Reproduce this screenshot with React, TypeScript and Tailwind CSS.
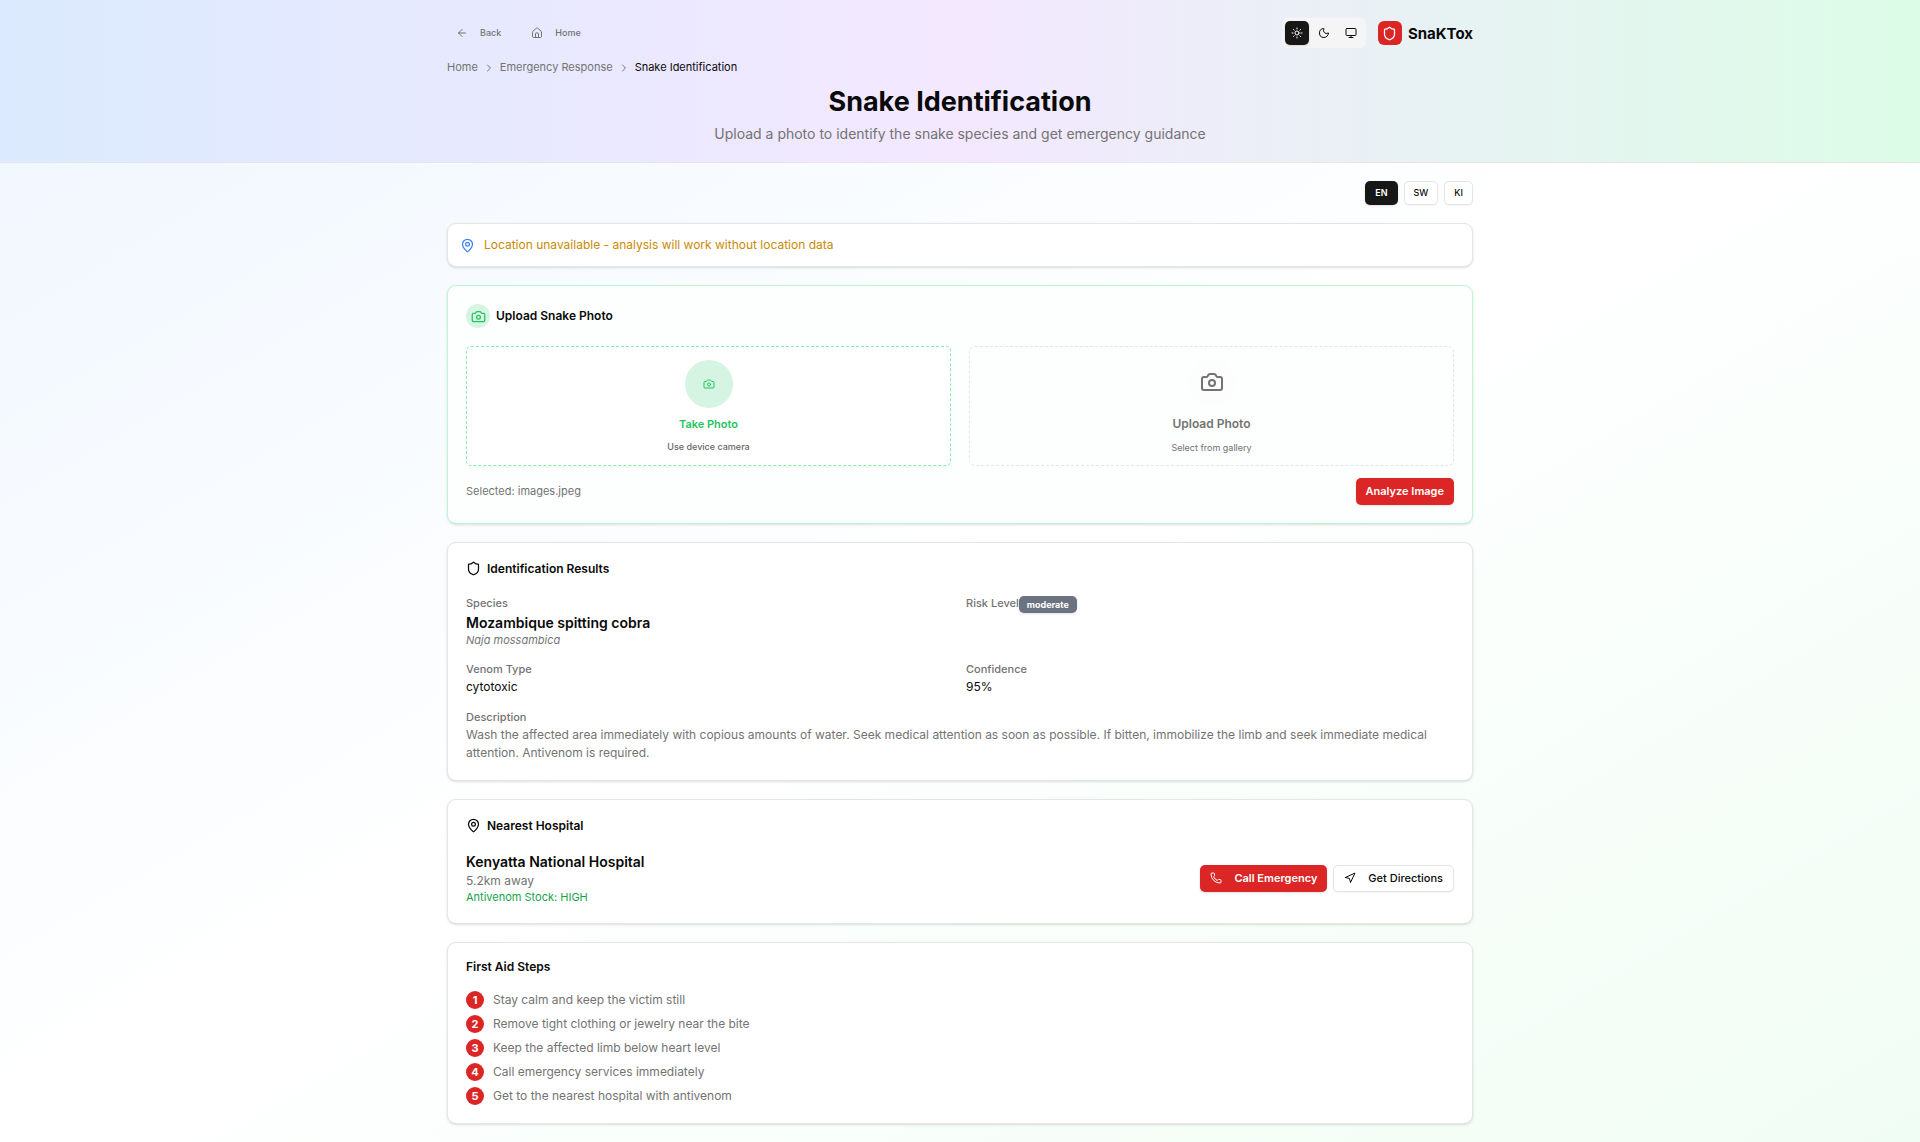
import type { ReactNode } from 'react';
import {
  ArrowLeft,
  Camera,
  ChevronRight,
  House,
  MapPin,
  Monitor,
  Moon,
  Navigation,
  Phone,
  Shield,
  Sun,
} from 'lucide-react';

const steps = [
  'Stay calm and keep the victim still',
  'Remove tight clothing or jewelry near the bite',
  'Keep the affected limb below heart level',
  'Call emergency services immediately',
  'Get to the nearest hospital with antivenom',
];

function Card({ children }: { children: ReactNode }) {
  return (
    <section className="rounded-[9px] border border-[#e5e5e5] bg-white p-[18px] shadow-sm">{children}</section>
  );
}

function CardTitle({ icon, children }: { icon?: ReactNode; children: ReactNode }) {
  return (
    <h2 className="mb-[18px] flex items-center gap-[6px] text-[12px] leading-none font-semibold">
      {icon}
      {children}
    </h2>
  );
}

function Field({ label, children }: { label: string; children: ReactNode }) {
  return (
    <div>
      <dt className="text-[11px] leading-[18px] font-medium text-[#737373]">{label}</dt>
      <dd>{children}</dd>
    </div>
  );
}

function Header() {
  return (
    <header className="border-b border-[#e5e5e5] bg-linear-to-r/srgb from-[#dbeafe] via-[#f3e8ff] to-[#dcfce7]">
      <div className="mx-auto max-w-[1062px] p-[18px]">
        <div className="flex items-center justify-between">
          <div className="flex gap-[12px] text-[9px] font-medium text-[#737373]">
            <button type="button" className="flex h-[24px] items-center gap-[12px] rounded-[5px] px-[9px]">
              <ArrowLeft size={12} />
              Back
            </button>
            <button type="button" className="flex h-[24px] items-center gap-[12px] rounded-[5px] px-[9px]">
              <House size={12} />
              Home
            </button>
          </div>
          <div className="flex items-center gap-[12px]">
            <div className="flex gap-[3px] rounded-[6px] bg-[#f5f5f5] p-[3px]">
              <button type="button" aria-label="Light theme" className="grid size-[24px] place-items-center rounded-[5px] bg-[#171717] text-white shadow-sm">
                <Sun size={12} />
              </button>
              <button type="button" aria-label="Dark theme" className="grid size-[24px] place-items-center rounded-[5px]">
                <Moon size={12} />
              </button>
              <button type="button" aria-label="System theme" className="grid size-[24px] place-items-center rounded-[5px]">
                <Monitor size={12} />
              </button>
            </div>
            <div className="flex items-center gap-[6px]">
              <span className="grid size-[24px] place-items-center rounded-[6px] bg-[#dc2626] text-white">
                <Shield size={15} />
              </span>
              <span className="text-[15px] leading-[21px] font-bold">SnaKTox</span>
            </div>
          </div>
        </div>
        <nav aria-label="Breadcrumb" className="mt-[12px] flex items-center gap-[5px] text-[11px] leading-[15px] text-[#737373]">
          <a href="#home">Home</a>
          <ChevronRight size={12} />
          <a href="#emergency">Emergency Response</a>
          <ChevronRight size={12} />
          <span className="text-[#0a0a0a]">Snake Identification</span>
        </nav>
        <div className="mt-[12px] text-center">
          <h1 className="text-[27px] leading-[30px] font-bold">Snake Identification</h1>
          <p className="mt-[6px] text-[14px] leading-[21px] text-[#737373]">
            Upload a photo to identify the snake species and get emergency guidance
          </p>
        </div>
      </div>
    </header>
  );
}

function UploadCard() {
  return (
    <section className="rounded-[9px] border border-[#bbf7d0] bg-[#fdfffe] p-[18px] shadow-sm">
      <h2 className="mb-[18px] flex items-center gap-[6px] text-[12px] leading-none font-semibold">
        <span className="grid size-[24px] place-items-center rounded-full bg-[#d5f4e1] text-[#22c55e]">
          <Camera size={15} />
        </span>
        Upload Snake Photo
      </h2>
      <div className="grid grid-cols-2 gap-[18px]">
        <button type="button" className="flex min-h-[120px] flex-col items-center justify-center gap-[9px] rounded-[5px] border border-dashed border-[#86efac] bg-white shadow-xs">
          <span className="grid size-[48px] place-items-center rounded-full bg-[#d5f4e1] text-[#22c55e]">
            <Camera size={12} />
          </span>
          <span className="text-[11px] leading-[15px] font-semibold text-[#22c55e]">Take Photo</span>
          <span className="text-[9px] leading-[12px] font-medium text-[#666666]">Use device camera</span>
        </button>
        <button type="button" className="flex min-h-[120px] flex-col items-center justify-center gap-[9px] rounded-[6px] border border-dashed border-[#e5e5e5] text-[#737373]">
          <span className="grid size-[48px] place-items-center rounded-full bg-[#fdfdfd]">
            <Camera size={24} />
          </span>
          <span className="text-[12px] leading-[18px] font-semibold">Upload Photo</span>
          <span className="text-[9px] leading-[12px]">Select from gallery</span>
        </button>
      </div>
      <div className="mt-[12px] flex items-center justify-between">
        <p className="text-[11px] leading-[15px] text-[#737373]">Selected: images.jpeg</p>
        <button type="button" className="h-[27px] rounded-[5px] bg-[#dc2626] px-[10px] text-[11px] font-semibold text-white shadow-sm">
          Analyze Image
        </button>
      </div>
    </section>
  );
}

function ResultsCard() {
  return (
    <Card>
      <CardTitle icon={<Shield size={15} />}>Identification Results</CardTitle>
      <dl className="grid grid-cols-2 gap-[12px] text-[12px] leading-[18px]">
        <Field label="Species">
          <p className="text-[14px] leading-[21px] font-semibold">Mozambique spitting cobra</p>
          <p className="text-[11px] leading-[15px] text-[#737373] italic">Naja mossambica</p>
        </Field>
        <div className="flex items-start">
          <dt className="text-[11px] leading-[18px] font-medium text-[#737373]">Risk Level</dt>
          <dd className="mt-[2px] rounded-[5px] bg-[#6b7280] px-[8px] text-[9px] leading-[17px] font-bold text-white shadow-sm">
            moderate
          </dd>
        </div>
        <Field label="Venom Type">cytotoxic</Field>
        <Field label="Confidence">95%</Field>
        <div className="col-span-2">
          <Field label="Description">
            <p className="text-[#737373]">
              Wash the affected area immediately with copious amounts of water. Seek medical attention as soon as
              possible. If bitten, immobilize the limb and seek immediate medical attention. Antivenom is required.
            </p>
          </Field>
        </div>
      </dl>
    </Card>
  );
}

function HospitalCard() {
  return (
    <Card>
      <CardTitle icon={<MapPin size={15} />}>Nearest Hospital</CardTitle>
      <div className="flex items-center justify-between">
        <div>
          <h3 className="text-[14px] leading-[21px] font-semibold">Kenyatta National Hospital</h3>
          <p className="text-[12px] leading-[18px] text-[#737373]">5.2km away</p>
          <p className="text-[11px] leading-[15px] text-[#16a34a]">Antivenom Stock: HIGH</p>
        </div>
        <div className="flex gap-[6px] text-[11px]">
          <button type="button" className="flex h-[27px] items-center gap-[12px] rounded-[5px] bg-[#dc2626] px-[10px] font-semibold text-white shadow-sm">
            <Phone size={12} />
            Call Emergency
          </button>
          <button type="button" className="flex h-[27px] items-center gap-[12px] rounded-[5px] border border-[#e5e5e5] bg-white px-[10px] font-medium shadow-xs">
            <Navigation size={12} />
            Get Directions
          </button>
        </div>
      </div>
    </Card>
  );
}

function FirstAidCard() {
  return (
    <Card>
      <CardTitle>First Aid Steps</CardTitle>
      <ol className="grid gap-[6px] text-[12px] leading-[18px] text-[#737373]">
        {steps.map((step, i) => (
          <li key={step} className="flex gap-[9px]">
            <span className="grid size-[18px] shrink-0 place-items-center rounded-full bg-[#dc2626] text-[11px] leading-none font-bold text-white">
              {i + 1}
            </span>
            {step}
          </li>
        ))}
      </ol>
    </Card>
  );
}

export default function App() {
  return (
    <div className="min-h-screen bg-linear-to-br/srgb from-[#eff6ff] via-white to-[#f0fdf4] font-[Inter,sans-serif] text-[#0a0a0a]">
      <Header />
      <main className="mx-auto flex max-w-[1062px] flex-col gap-[18px] p-[18px]">
        <div className="flex justify-end gap-[6px] text-[9px] font-medium">
          <button type="button" className="h-[24px] rounded-[5px] bg-[#171717] px-[10px] font-semibold text-white shadow-sm">
            EN
          </button>
          <button type="button" className="h-[24px] rounded-[5px] border border-[#e5e5e5] bg-white px-[9px] shadow-xs">
            SW
          </button>
          <button type="button" className="h-[24px] rounded-[5px] border border-[#e5e5e5] bg-white px-[9px] shadow-xs">
            KI
          </button>
        </div>
        <section className="flex items-center gap-[9px] rounded-[9px] border border-[#e5e5e5] bg-white p-[12px] text-[12px] leading-[18px] text-[#ca8a04] shadow-sm">
          <MapPin size={15} className="text-[#3b82f6]" />
          Location unavailable - analysis will work without location data
        </section>
        <UploadCard />
        <ResultsCard />
        <HospitalCard />
        <FirstAidCard />
      </main>
    </div>
  );
}
